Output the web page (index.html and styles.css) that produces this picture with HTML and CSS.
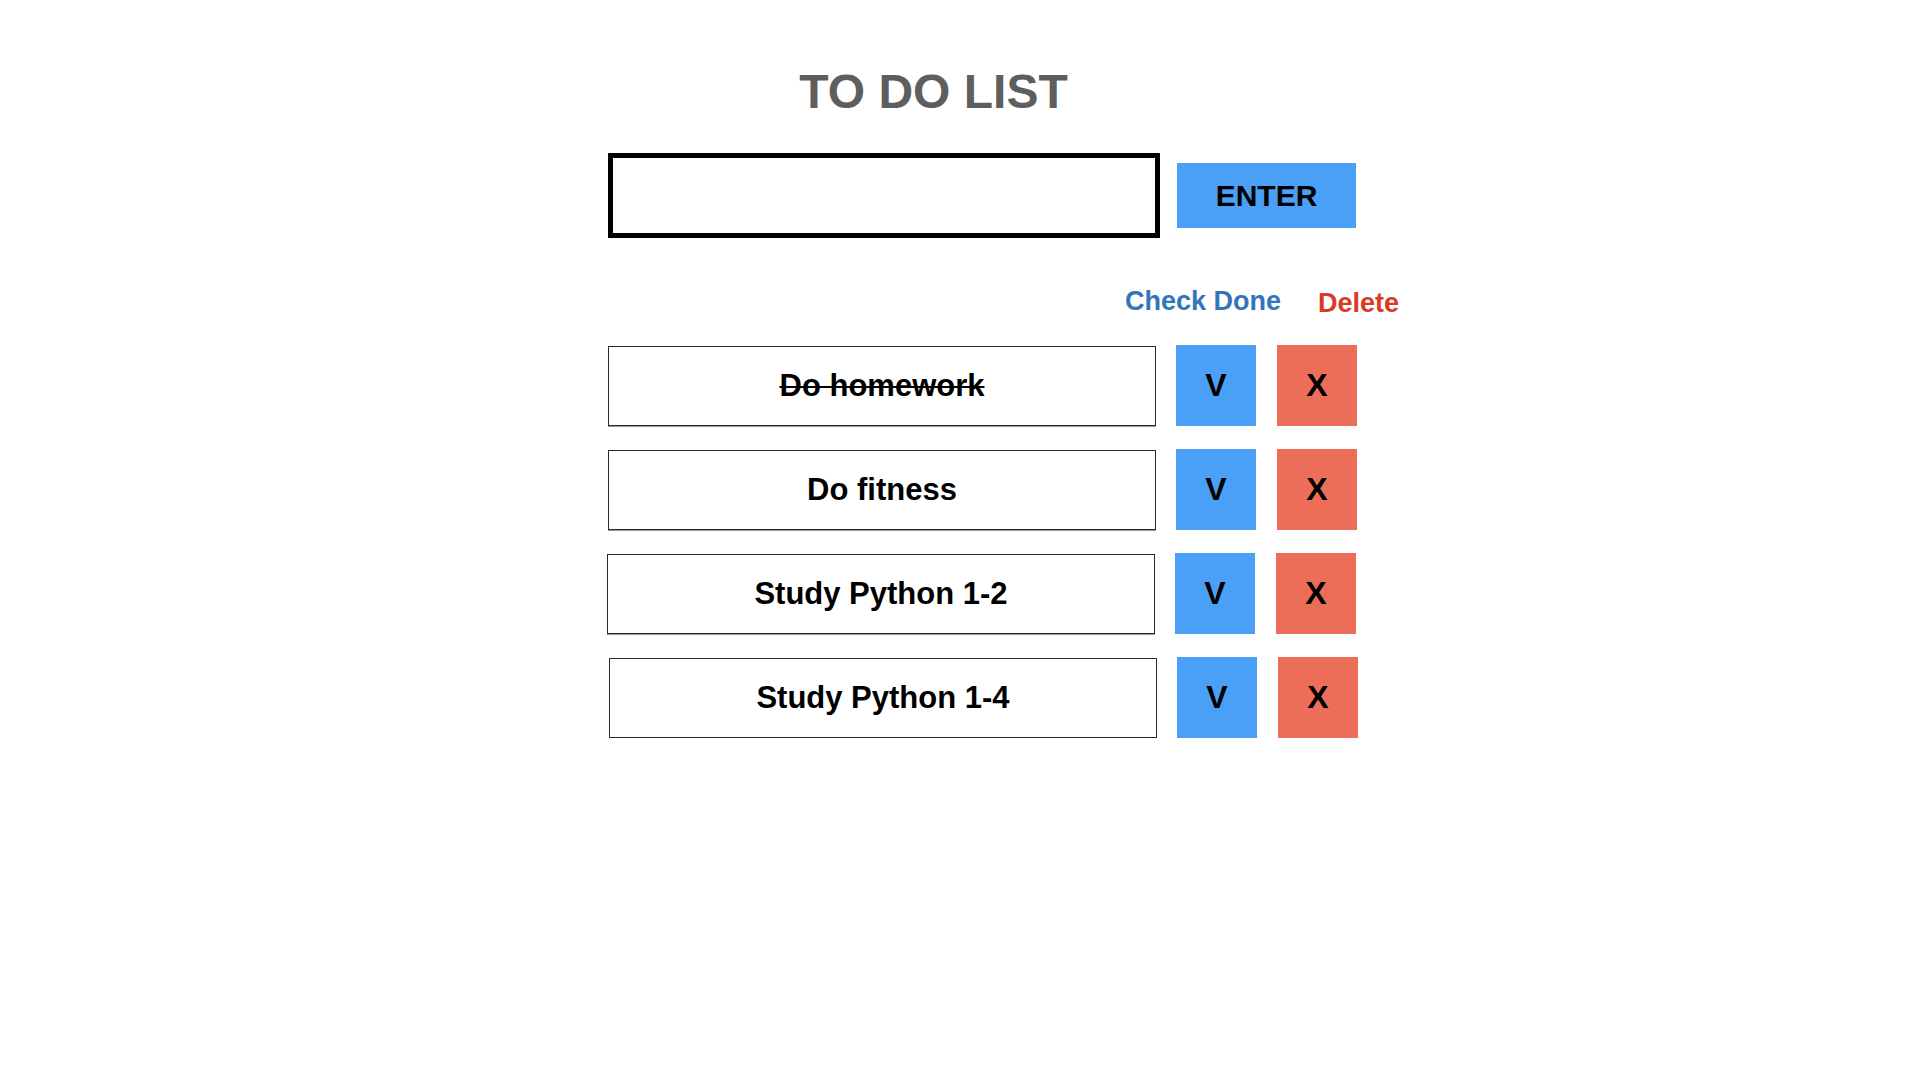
FILE: index.html
```html
<!DOCTYPE html>
<html lang="en">
<head>
<meta charset="utf-8">
<title>To Do List</title>
<link rel="stylesheet" href="styles.css">
</head>
<body>
<main class="app">
  <h1 class="title">TO DO LIST</h1>
  <div class="entry">
    <input class="entry-input" type="text" aria-label="New task">
    <button class="btn btn-enter" type="button">ENTER</button>
  </div>
  <div class="labels">
    <span class="label label-done">Check Done</span>
    <span class="label label-delete">Delete</span>
  </div>
  <ul class="list">
    <li class="row">
      <div class="task task-done">Do homework</div>
      <button class="btn btn-check" type="button">V</button>
      <button class="btn btn-delete" type="button">X</button>
    </li>
    <li class="row">
      <div class="task">Do fitness</div>
      <button class="btn btn-check" type="button">V</button>
      <button class="btn btn-delete" type="button">X</button>
    </li>
    <li class="row row-left">
      <div class="task">Study Python 1-2</div>
      <button class="btn btn-check" type="button">V</button>
      <button class="btn btn-delete" type="button">X</button>
    </li>
    <li class="row row-right">
      <div class="task">Study Python 1-4</div>
      <button class="btn btn-check" type="button">V</button>
      <button class="btn btn-delete" type="button">X</button>
    </li>
  </ul>
</main>
</body>
</html>
```
FILE: styles.css
```css
* { box-sizing: border-box; }

html, body {
  margin: 0;
  padding: 0;
  background: #ffffff;
}

body {
  font-family: "Liberation Sans", Arial, Helvetica, sans-serif;
  color: #000;
}

.app {
  display: flex;
  flex-direction: column;
  align-items: flex-start;
  padding-top: 68px;
  padding-left: 608px;
}

.title {
  margin: 0;
  width: 651px;
  text-align: center;
  font-size: 48px;
  line-height: 48px;
  font-weight: 700;
  color: #5e5e5e;
}

.entry {
  display: flex;
  align-items: center;
  gap: 17px;
  margin-top: 37px;
}

.entry-input {
  width: 552px;
  height: 85px;
  border: 5px solid #000;
  outline: none;
  background: #fff;
  margin: 0;
  padding: 0 12px;
  font-family: inherit;
  font-size: 30px;
}

.btn {
  display: flex;
  align-items: center;
  justify-content: center;
  border: none;
  margin: 0;
  padding: 0;
  font-family: inherit;
  font-weight: 700;
  color: #000;
  cursor: pointer;
}

.btn-enter {
  width: 179px;
  height: 65px;
  background: #49a0f6;
  font-size: 30px;
}

.labels {
  display: flex;
  align-items: flex-start;
  margin-top: 50px;
  margin-left: 517px;
  gap: 37px;
}

.label {
  font-size: 27px;
  line-height: 27px;
  font-weight: 700;
}

.label-done { color: #3375ba; }

.label-delete {
  color: #d93a26;
  padding-top: 2px;
}

.list {
  list-style: none;
  margin: 28px 0 0 0;
  padding: 0;
  display: flex;
  flex-direction: column;
  gap: 23px;
}

.row {
  display: flex;
  align-items: center;
  height: 81px;
}

.row-left { margin-left: -1px; }
.row-right { margin-left: 1px; }

.task {
  width: 548px;
  height: 80px;
  border: 1px solid #2a2a2a;
  box-shadow: 0 1px 0 #9a9a9a;
  display: flex;
  align-items: center;
  justify-content: center;
  font-size: 31px;
  font-weight: 700;
  color: #000;
  margin-right: 20px;
}

.task-done {
  text-decoration: line-through;
  text-decoration-thickness: 2px;
}

.btn-check,
.btn-delete {
  width: 80px;
  height: 81px;
  font-size: 32px;
}

.btn-check {
  background: #49a0f6;
  margin-right: 21px;
}

.btn-delete {
  background: #ec6e58;
}
```
